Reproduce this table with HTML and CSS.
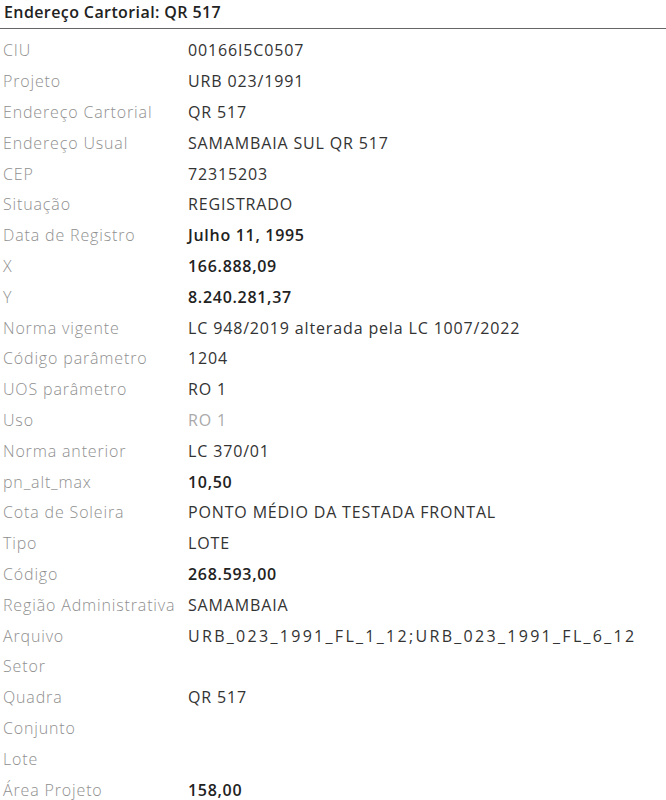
FILE: index.html
```html
<!DOCTYPE html>
<html lang="pt-BR">
<head>
    <meta charset="UTF-8">
    <meta name="viewport" content="width=device-width, initial-scale=1.0">
    <title>Endereço Cartorial: QR 517</title>
    <link rel="stylesheet" href="styles.css">
</head>
<body>
    <div class="popup">
        <h2 class="popup-title">Endereço Cartorial: QR 517</h2>

        <table class="attr-table">
            <tr><th>CIU</th><td>00166I5C0507</td></tr>
            <tr><th>Projeto</th><td>URB 023/1991</td></tr>
            <tr><th>Endereço Cartorial</th><td>QR 517</td></tr>
            <tr><th>Endereço Usual</th><td>SAMAMBAIA SUL QR 517</td></tr>
            <tr><th>CEP</th><td>72315203</td></tr>
            <tr><th>Situação</th><td>REGISTRADO</td></tr>
            <tr><th>Data de Registro</th><td class="num">Julho 11, 1995</td></tr>
            <tr><th>X</th><td class="num">166.888,09</td></tr>
            <tr><th>Y</th><td class="num">8.240.281,37</td></tr>
            <tr><th>Norma vigente</th><td>LC 948/2019 alterada pela LC 1007/2022</td></tr>
            <tr><th>Código parâmetro</th><td>1204</td></tr>
            <tr><th>UOS parâmetro</th><td>RO 1</td></tr>
            <tr><th>Uso</th><td class="muted">RO 1</td></tr>
            <tr><th>Norma anterior</th><td>LC 370/01</td></tr>
            <tr><th>pn_alt_max</th><td class="num">10,50</td></tr>
            <tr><th>Cota de Soleira</th><td>PONTO MÉDIO DA TESTADA FRONTAL</td></tr>
            <tr><th>Tipo</th><td>LOTE</td></tr>
            <tr><th>Código</th><td class="num">268.593,00</td></tr>
            <tr><th>Região Administrativa</th><td>SAMAMBAIA</td></tr>
            <tr><th>Arquivo</th><td class="file">URB_023_1991_FL_1_12;URB_023_1991_FL_6_12</td></tr>
            <tr><th>Setor</th><td></td></tr>
            <tr><th>Quadra</th><td>QR 517</td></tr>
            <tr><th>Conjunto</th><td></td></tr>
            <tr><th>Lote</th><td></td></tr>
            <tr><th>Área Projeto</th><td class="num">158,00</td></tr>
        </table>
    </div>
</body>
</html>
```

FILE: styles.css
```css
body {
    margin: 0;
    background-color: #ffffff;
    font-family: 'Open Sans', 'Noto Sans', sans-serif;
    color: #333;
}

.popup {
    width: 666px;
}

/* タイトル */
.popup-title {
    margin: 0;
    padding: 1px 0 0 4px;
    height: 27px;
    font-size: 16px;
    font-weight: 600;
    letter-spacing: 0.4px;
    color: #222;
    border-bottom: 1.5px solid #666;
    box-sizing: content-box;
}

.attr-table {
    border-collapse: collapse;
    margin-top: 6px;
    font-size: 16px;
    letter-spacing: 0.85px;
}

.attr-table tr {
    height: 30.8px;
}

.attr-table th {
    width: 181px;
    padding: 0 0 0 3px;
    text-align: left;
    font-weight: 300;
    color: #8f8f8f;
    white-space: nowrap;
}

.attr-table td {
    padding: 0 0 0 4px;
    color: #333;
    white-space: nowrap;
}

.attr-table td.num {
    font-weight: 600;
    letter-spacing: 0.7px;
    color: #222;
}

.attr-table td.muted {
    color: #aaa;
}

/* ファイル名は幅広 */
.attr-table td.file {
    letter-spacing: 2.3px;
}
```
